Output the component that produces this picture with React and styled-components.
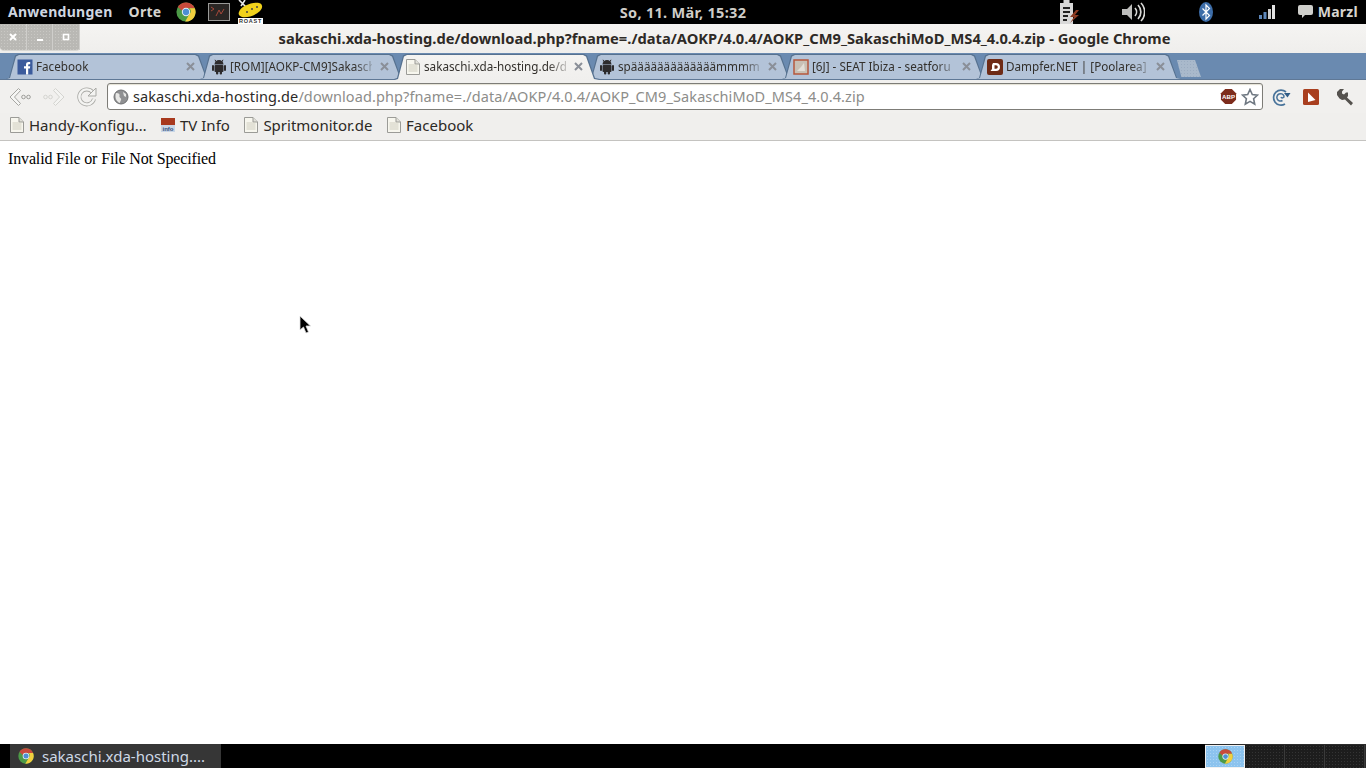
import React from "react";
import styled, { createGlobalStyle } from "styled-components";

const Global = createGlobalStyle`
  html, body { margin: 0; padding: 0; height: 100%; background: #fff; }
  #root { height: 100%; }
`;
const UI = `"Noto Sans", "Open Sans", sans-serif`;
const Dots = (c, s = 3) => `radial-gradient(${c} .8px, transparent 1px) 0 0 / ${s}px ${s}px`;

const Page = styled.div`
  position: relative; width: 1366px; height: 768px; overflow: hidden;
  display: flex; flex-direction: column; font-family: ${UI};
`;
const TopPanel = styled.header`
  height: 24px; background: #000; display: grid;
  grid-template-columns: 1fr auto 1fr; align-items: center; color: #d9d7d2;
  font-size: 14px; font-weight: 700;
`;
const PanelLeft = styled.div`display: flex; align-items: center; padding-left: 8px;`;
const PanelMenu = styled.span`margin-right: ${p => p.$gap}px; padding-bottom: 2px; letter-spacing: .27px; color: ${p => p.$c || "#cfd6e0"};`;
const Clock = styled.span`letter-spacing: .3px; font-size: 14.5px; padding-bottom: 1px; color: #cfcdc8;`;
const PanelRight = styled.div`display: flex; align-items: center; justify-content: flex-end; height: 24px;`;
const PanelIcon = styled.svg`display: block; flex: none; margin-left: ${p => p.$ml || 0}px; margin-right: ${p => p.$mr || 0}px;`;
const TitleBar = styled.div`
  height: 29px; background: linear-gradient(#f5f4f2, #efeeec); display: flex; align-items: center;
`;
const WinButtons = styled.div`
  display: flex; width: 80px; height: 26px; align-self: flex-start; background: ${Dots("#c9c8c4")}, #b9b8b4; border-radius: 0 0 4px 4px;
  box-shadow: 0 1px 0 #d8d7d3;
`;
const WinBtn = styled.div`
  flex: 1; display: flex; align-items: center; justify-content: center; border-right: 1px solid #cfcecb;
`;
const Title = styled.div`
  flex: 1; text-align: center; font-weight: 700; font-size: 14.7px; color: #2e2a26; padding: 0 0 2px 3px; white-space: nowrap;
`;
const TabStrip = styled.div`
  height: 26px; background: #6a8ab0; display: flex; align-items: flex-end; padding-left: 6px; box-sizing: border-box;
`;
const TabShape = "polygon(0 100%, 3px 96%, 9px 6%, 12px 0, calc(100% - 16px) 0, calc(100% - 13px) 6%, calc(100% - 5px) 96%, 100% 100%)";
const Tab = styled.div`
  position: relative; width: 206px; height: 25px; margin-right: -12px; display: flex; align-items: center;
  padding: 0 17px 0 11px; box-sizing: border-box; font-size: 11.7px; color: #33302c;
  z-index: ${p => p.$active ? 2 : 1}; white-space: nowrap;
  &::before { content: ""; position: absolute; inset: 0; background: #56718f; clip-path: ${TabShape}; }
  &::after { content: ""; position: absolute; inset: 1px 1px ${p => p.$active ? "-1px" : "0"} 1px;
    background: ${p => p.$active ? "linear-gradient(#f4f3f1,#f0efed)" : "#b3c3d8"}; clip-path: ${TabShape}; }
  & > * { position: relative; z-index: 1; }
`;
const TabIcon = styled.span`width: 16px; height: 16px; flex: none; display: block; margin-right: 3px;`;
const TabText = styled.span`
  flex: 1; min-width: 0; padding-bottom: 2px;
  -webkit-mask-image: linear-gradient(to right, #000 calc(100% - 18px), rgba(0,0,0,.25));
  mask-image: linear-gradient(to right, #000 calc(100% - 18px), rgba(0,0,0,.25));
`;
const TabClose = styled.span`width: 9px; height: 9px; flex: none; margin-left: 8px; display: block; line-height: 0;`;
const NewTab = styled.div`
  width: 24px; height: 17px; margin: 0 0 2px 7px; background: ${Dots("#9bacc1")}, #a9b9cb; box-sizing: border-box;
  clip-path: polygon(0 0, 75% 0, 100% 100%, 18% 100%);
`;
const Toolbar = styled.div`
  height: 34px; background: #f1f0ee; display: flex; align-items: center; padding-left: 9px; border-top: 1px solid #5f7896; box-sizing: border-box;
`;
const NavIcon = styled.span`width: 22px; height: 22px; display: block; margin-right: ${p => p.$mr}px; line-height: 0;`;
const Omnibox = styled.div`
  width: 1156px; height: 27px; background: #fff; border: 1px solid #7d7c77; border-radius: 3px; box-sizing: border-box;
  display: flex; align-items: center; padding: 0 3px 0 5px; font-size: 14.5px; box-shadow: inset 0 1px 1px #e4e1d4;
`;
const Host = styled.span`color: #2c2a28; letter-spacing: .1px; padding-bottom: 2px;`;
const Rest = styled.span`color: #8d8d8a; flex: 1; letter-spacing: .1px; padding-bottom: 2px;`;
const ToolIcons = styled.div`display: flex; align-items: center; padding-left: 8px;`;
const ToolIcon = styled.span`width: 20px; height: 20px; display: block; margin-right: ${p => p.$mr || 10}px; line-height: 0;`;
const Bookmarks = styled.nav`
  height: 28px; background: #f0efed; border-bottom: 1px solid #c4c3c0; display: flex; align-items: center; padding: 0 0 4px 9px; box-sizing: border-box;
  font-size: 15px; color: #2c2925;
`;
const Bookmark = styled.span`display: flex; align-items: center; gap: 4px; margin-right: 13.5px; white-space: nowrap;`;
const Content = styled.main`
  flex: 1; background: #fff; padding: 9px 8px; font: 16px/18px "Liberation Serif", serif; letter-spacing: -.15px; color: #000;
`;
const BottomPanel = styled.footer`
  height: 24px; background: #000; display: flex; align-items: stretch; padding-left: 10px;
`;
const TaskButton = styled.div`
  width: 211px; background: #363636; display: flex; align-items: center; gap: 8px; padding-left: 8px; box-sizing: border-box;
  color: #cfd9e6; font-size: 15px;
`;
const Workspaces = styled.div`margin-left: auto; display: flex; background: #2c2c2c; width: 161px; padding-top: 1px; box-sizing: border-box;`;
const Workspace = styled.div`
  width: 40px; box-sizing: border-box; display: flex; align-items: center; justify-content: center;
  background: ${p => p.$on ? Dots("#a9d3f3") + ", #8cc3ee" : Dots("#343434") + ", #1d1d1d"};
  border: ${p => p.$on ? "1px solid #f0f0f0" : "0"}; border-right: ${p => p.$on ? "" : "1px solid #3a3a3a"};
`;
const Cursor = styled.svg`position: absolute; left: 299px; top: 315px;`;

const Chrome = ({ s = 16 }) => (
  <svg width={s} height={s} viewBox="0 0 24 24" style={{ display: "block", flex: "none" }}>
    <circle cx="12" cy="12" r="11.5" fill="#4c9a47" />
    <path d="M2.2 6A11.5 11.5 0 0 1 22.6 7.5H12A5 5 0 0 0 7.3 10.5Z" fill="#c8493c" />
    <path d="M22.6 7.5A11.5 11.5 0 0 1 11 23.5L16.2 14.5A5 5 0 0 0 16 7.5Z" fill="#f2cf3e" />
    <circle cx="12" cy="12" r="5" fill="#e8eef6" />
    <circle cx="12" cy="12" r="3.8" fill="#4d8ed4" />
  </svg>
);
const Page16 = () => (
  <svg width="16" height="16" viewBox="0 0 16 16" style={{ display: "block", flex: "none" }}>
    <path d="M1.5 .5H10L14.5 5V15.5H1.5Z" fill="#f7f6ee" stroke="#9b9b97" />
    <path d="M10 .5V5H14.5" fill="#e2e1da" stroke="#9b9b97" />
    <path d="M3.5 6h9M3.5 8h9M3.5 10h9M3.5 12h9" stroke="#cfcdbf" />
  </svg>
);
const Android = () => (
  <svg width="16" height="16" viewBox="0 0 16 16" fill="#2d2b2c" style={{ display: "block" }}>
    <path d="M5 2.5L4 .8M11 2.5L12 .8" stroke="#2d2b2c" />
    <path d="M3.5 5.5a4.5 4.5 0 0 1 9 0Z" />
    <rect x="3.5" y="6" width="9" height="7" rx="1" />
    <rect x="1" y="6" width="2" height="6" rx="1" />
    <rect x="13" y="6" width="2" height="6" rx="1" />
    <rect x="5" y="12" width="2.3" height="3.5" rx="1" />
    <rect x="8.7" y="12" width="2.3" height="3.5" rx="1" />
  </svg>
);
const Fb = () => (
  <svg width="16" height="16" viewBox="0 0 16 16" style={{ display: "block" }}>
    <rect x=".5" y=".5" width="15" height="15" fill="#3b5b9c" />
    <path d="M9 15.5V9.5H7V7.2h2V5.6C9 3.7 10.1 3 11.6 3h1.6v2.2h-1.1c-.7 0-.9.3-.9 1v1h2l-.3 2.3h-1.7v6Z" fill="#fff" />
  </svg>
);
const Seat = () => (
  <svg width="16" height="16" viewBox="0 0 16 16" style={{ display: "block" }}>
    <rect x="1" y="1" width="14" height="14" fill="#c9c0b4" stroke="#b6583c" strokeWidth="1.5" />
    <path d="M4 12 L8 8 L11 4 L12 12Z" fill="#e4dfd7" />
  </svg>
);
const Dampfer = () => (
  <svg width="16" height="16" viewBox="0 0 16 16" style={{ display: "block" }}>
    <rect width="16" height="16" rx="2" fill="#6e2b16" />
    <path d="M6 4H9A4 4 0 0 1 9 12H3.5L5 10V6Z" fill="#fff" />
    <path d="M7.5 6.2H9A1.8 1.8 0 0 1 9 9.8H7.5Z" fill="#6e2b16" />
  </svg>
);
const Close = () => (
  <svg width="9" height="9" viewBox="0 0 9 9"><path d="M1 1L8 8M8 1L1 8" stroke="#8a8f98" strokeWidth="2" /></svg>
);
const WinGlyph = ({ k }) => (
  <svg width="10" height="10" viewBox="0 0 10 10">
    {k === "x" && <path d="M2 2L8 8M8 2L2 8" stroke="#fff" strokeWidth="2" />}
    {k === "m" && <rect x="2" y="7" width="6" height="2" fill="#fff" />}
    {k === "r" && <rect x="2.5" y="2.5" width="5" height="5" fill="none" stroke="#fff" strokeWidth="1.6" />}
  </svg>
);

const tabs = [
  { icon: <Fb />, text: "Facebook" },
  { icon: <Android />, text: "[ROM][AOKP-CM9]Sakasch" },
  { icon: <Page16 />, text: "sakaschi.xda-hosting.de/dc", active: true },
  { icon: <Android />, text: "spääääääääääääämmmm" },
  { icon: <Seat />, text: "[6J] - SEAT Ibiza - seatforu" },
  { icon: <Dampfer />, text: "Dampfer.NET | [Poolarea]" },
];

export default function App() {
  return (
    <Page>
      <Global />
      <TopPanel>
        <PanelLeft>
          <PanelMenu $gap={16}>Anwendungen</PanelMenu>
          <PanelMenu $gap={15} $c="#d6d4cf">Orte</PanelMenu>
          <Chrome s={20} />
          <PanelIcon width="22" height="18" viewBox="0 0 22 18" $ml={12}>
            <rect x=".5" y=".5" width="21" height="17" fill="#2a2624" stroke="#9a9a98" />
            <path d="M3 4l3 2-3 2M8 13l3-6 2 4 3-5" stroke="#a6483a" fill="none" />
          </PanelIcon>
          <PanelIcon width="25" height="24" viewBox="0 0 25 24" $ml={8}>
            <path d="M1 0l9 9M7 0L3 6" stroke="#e8e8e8" strokeWidth="1.6" />
            <path d="M1 12C3 6 14 2 21 3c4 1 4 5 1 8-5 5-13 7-18 6-3-1-4-3-3-5Z" fill="#f1d21c" />
            <circle cx="9" cy="12" r="1" fill="#444" /><circle cx="14" cy="9" r="1" fill="#444" /><circle cx="19" cy="7" r="1" fill="#444" />
            <rect y="18" width="25" height="6" fill="#fff" />
            <text x="12.5" y="23.2" fontSize="5.5" fontWeight="700" fontFamily="Liberation Sans" letterSpacing=".8" fill="#333" textAnchor="middle">ROAST</text>
          </PanelIcon>
        </PanelLeft>
        <Clock>So, 11. Mär, 15:32</Clock>
        <PanelRight>
          <PanelIcon width="21" height="24" viewBox="0 0 21 24" $mr={41}>
            <path d="M1 3h3.5V0h6v3H14v21H1Z" fill="#d8d8d8" />
            <path d="M4 8h7M4 12h7M4 16h5M4 20h4" stroke="#222" strokeWidth="2" />
            <path d="M17 10l-6 7h4l-4 6 9-8h-4l4-5Z" fill="#8a3a22" />
          </PanelIcon>
          <PanelIcon width="24" height="20" viewBox="0 0 24 20" $mr={54}>
            <path d="M1 7h5l5-5v16l-5-5H1Z" fill="#bdbdbb" />
            <path d="M14 6a6 6 0 0 1 0 8M17 3a10 10 0 0 1 0 14M20 1a13 13 0 0 1 0 18" fill="none" stroke="#d9d9d7" strokeWidth="1.7" />
          </PanelIcon>
          <PanelIcon width="14" height="20" viewBox="0 0 14 20" $mr={46}>
            <ellipse cx="7" cy="10" rx="7" ry="10" fill="#3d6da8" />
            <path d="M3.5 6.5l7 7L7 17V3l3.5 3.5-7 7" fill="none" stroke="#fff" strokeWidth="1.2" />
          </PanelIcon>
          <PanelIcon width="16" height="14" viewBox="0 0 16 14" $mr={23}>
            <rect x="0" y="10" width="3" height="4" fill="#5d86b8" />
            <rect x="4.5" y="7" width="3" height="7" fill="#5d86b8" />
            <rect x="9" y="4" width="3" height="10" fill="#cfcfcf" />
            <rect x="13" y="0" width="3" height="14" fill="#e3e3e3" />
          </PanelIcon>
          <PanelIcon width="15" height="14" viewBox="0 0 15 14" $mr={5}>
            <path d="M2 0h11a2 2 0 0 1 2 2v6a2 2 0 0 1-2 2H7l-3 3v-3H2a2 2 0 0 1-2-2V2a2 2 0 0 1 2-2Z" fill="#cfcfcb" />
          </PanelIcon>
          <PanelMenu $gap={8} $c="#d6d4cf">Marzl</PanelMenu>
        </PanelRight>
      </TopPanel>
      <TitleBar>
        <WinButtons>
          <WinBtn><WinGlyph k="x" /></WinBtn>
          <WinBtn><WinGlyph k="m" /></WinBtn>
          <WinBtn><WinGlyph k="r" /></WinBtn>
        </WinButtons>
        <Title>sakaschi.xda-hosting.de/download.php?fname=./data/AOKP/4.0.4/AOKP_CM9_SakaschiMoD_MS4_4.0.4.zip - Google Chrome</Title>
      </TitleBar>
      <TabStrip>
        {tabs.map((t, i) => (
          <Tab key={i} $active={t.active}>
            <TabIcon>{t.icon}</TabIcon>
            <TabText>{t.text}</TabText>
            <TabClose><Close /></TabClose>
          </Tab>
        ))}
        <NewTab />
      </TabStrip>
      <Toolbar>
        <NavIcon $mr={12}>
          <svg width="22" height="22" viewBox="0 0 22 22" fill="none">
            <path d="M9.5 2.5L1 11l8.5 8.5 2-2L5.5 11l6-6.5Z" fill="#f6f6f4" stroke="#a6a6a2" />
            <circle cx="14.5" cy="11" r="1.8" stroke="#9c9c98" /><circle cx="19.5" cy="11" r="1.8" stroke="#9c9c98" />
          </svg>
        </NavIcon>
        <NavIcon $mr={11}>
          <svg width="22" height="22" viewBox="0 0 22 22" fill="none">
            <path d="M12.5 2.5L21 11l-8.5 8.5-2-2 6-6.500-6-6.500Z" fill="#f4f4f2" stroke="#d4d4d0" />
            <circle cx="2.5" cy="11" r="1.8" stroke="#d4d4d0" /><circle cx="7.5" cy="11" r="1.8" stroke="#d4d4d0" />
          </svg>
        </NavIcon>
        <NavIcon $mr={9}>
          <svg width="22" height="22" viewBox="0 0 22 22" fill="none">
            <path d="M18 13a7.5 7.5 0 1 1-1.5-7" stroke="#a9a9a5" strokeWidth="4" />
            <path d="M18 13a7.5 7.5 0 1 1-1.5-7" stroke="#f4f4f2" strokeWidth="2.4" />
            <path d="M20 2v8h-8Z" fill="#f4f4f2" stroke="#a9a9a5" />
          </svg>
        </NavIcon>
        <Omnibox>
          <svg width="16" height="16" viewBox="0 0 16 16" style={{ marginRight: 4, flex: "none" }}>
            <circle cx="8" cy="8" r="7" fill="#8f9092" stroke="#6f7072" />
            <path d="M3 4c3 0 4 1 3.5 3S9 9 8 11s-1 3-1 3-3-1-4-4 0-6 0-6ZM10 3l3 2v3l-2-1Z" fill="#e8e8e6" />
          </svg>
          <Host>sakaschi.xda-hosting.de</Host>
          <Rest>/download.php?fname=./data/AOKP/4.0.4/AOKP_CM9_SakaschiMoD_MS4_4.0.4.zip</Rest>
          <svg width="17" height="17" viewBox="0 0 18 18" style={{ marginRight: 4, flex: "none" }}>
            <path d="M5.5 1h7L17 5.5v7L12.5 17h-7L1 12.5v-7Z" fill="#7d2c1c" />
            <text x="9" y="11.5" fontSize="6.5" fontWeight="700" fontFamily="Liberation Sans" fill="#fff" textAnchor="middle">ABP</text>
          </svg>
          <svg width="18" height="18" viewBox="0 0 18 18" style={{ flex: "none" }}>
            <path d="M9 1.5l2.3 5 5.2.6-3.9 3.6 1.1 5.4L9 13.4l-4.7 2.7 1.1-5.4L1.5 7.1l5.2-.6Z" fill="#fff" stroke="#6f7882" strokeWidth="1.6" />
          </svg>
        </Omnibox>
        <ToolIcons>
          <ToolIcon>
            <svg width="20" height="20" viewBox="0 0 20 20" fill="none">
              <path d="M14 17a7.5 7.5 0 1 1 1-12" stroke="#48739a" strokeWidth="1.7" />
              <path d="M11.5 13.5a3.7 3.7 0 1 1 1.5-4.5c.3 2-2.5 2.5-3 1" stroke="#48739a" strokeWidth="1.5" />
              <path d="M13 6h6.5l-3 4.5Z" fill="#2f5c86" />
            </svg>
          </ToolIcon>
          <ToolIcon $mr={14}>
            <svg width="20" height="20" viewBox="0 0 20 20">
              <rect x="2" y="2" width="16" height="16" rx="1.5" fill="#a93f1f" />
              <path d="M7 5.5L14.5 13 7 15Z" fill="#fff" />
            </svg>
          </ToolIcon>
          <ToolIcon $mr={1}>
            <svg width="20" height="20" viewBox="0 0 20 20">
              <path d="M2 5l3-3h4L7 4.5v2l2 1L11 5.5l2 0V9l-1 1.5 6 5.5-2 2.5-6-6-3 .5-2.5-1.5L2 8Z" fill="#55524e" />
            </svg>
          </ToolIcon>
        </ToolIcons>
      </Toolbar>
      <Bookmarks>
        <Bookmark><Page16 />Handy-Konfigu…</Bookmark>
        <Bookmark>
          <svg width="16" height="16" viewBox="0 0 16 16" style={{ display: "block", flex: "none" }}>
            <rect x="1" y="1" width="14" height="7" fill="#a8391e" />
            <rect x="1" y="8" width="14" height="7" fill="#c9d6e6" />
            <text x="8" y="14" fontSize="6" fontFamily="Liberation Sans" fontWeight="700" fill="#33507c" textAnchor="middle">info</text>
          </svg>
          TV Info
        </Bookmark>
        <Bookmark><Page16 />Spritmonitor.de</Bookmark>
        <Bookmark><Page16 />Facebook</Bookmark>
      </Bookmarks>
      <Content>Invalid File or File Not Specified</Content>
      <BottomPanel>
        <TaskButton><Chrome s={16} />sakaschi.xda-hosting....</TaskButton>
        <Workspaces>
          <Workspace $on><Chrome s={15} /></Workspace>
          <Workspace /><Workspace /><Workspace />
        </Workspaces>
      </BottomPanel>
      <Cursor width="13" height="20" viewBox="0 0 13 20">
        <path d="M1 1v14l3.5-3 2.5 6 2.5-1-2.5-6h4.5Z" fill="#000" stroke="#ddd" strokeWidth=".8" />
      </Cursor>
    </Page>
  );
}
